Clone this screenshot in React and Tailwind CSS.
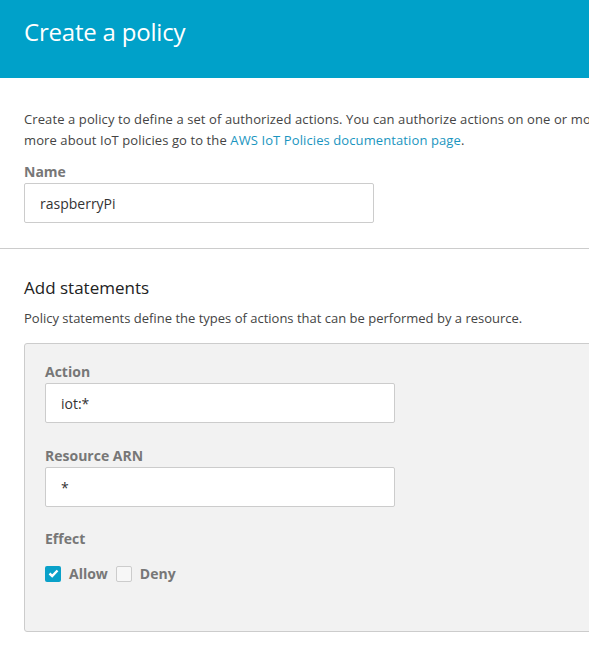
import React from "react";

const Field = ({ label, value, labelClass = "" }) => (
  <div className={labelClass}>
    <div className="text-[14px] font-bold text-[#777] leading-[20px]">{label}</div>
    <div className="mt-[1px] w-[350px] h-[40px] bg-white border border-[#ccc] rounded-[2px] flex items-center px-[15px] text-[14px] text-[#333]">
      {value}
    </div>
  </div>
);

const Checkbox = ({ checked, label }) => (
  <label className="flex items-center">
    {checked ? (
      <span className="w-[16px] h-[16px] rounded-[2px] bg-[#0aa1c9] flex items-center justify-center">
        <svg width="11" height="9" viewBox="0 0 11 9">
          <path d="M1.5 4.5 L4.2 7 L9.5 1.5" fill="none" stroke="white" strokeWidth="2.4" />
        </svg>
      </span>
    ) : (
      <span className="w-[16px] h-[16px] rounded-[2px] bg-[#f7f7f7] border border-[#ccc]" />
    )}
    <span className="ml-[8px] text-[14px] font-bold text-[#777]">{label}</span>
  </label>
);

export default function App() {
  return (
    <div className="w-[589px] h-[645px] overflow-hidden bg-white" style={{ fontFamily: '"Open Sans", sans-serif' }}>
      {/* Header */}
      <div className="h-[78px] bg-[#00a1c9] px-[24px] pt-[15px]">
        <h1 className="text-[24px] text-white leading-[34px] tracking-[-0.2px]">Create a policy</h1>
      </div>

      {/* Intro */}
      <div className="px-[24px] pt-[31px] pb-[25px] border-b border-[#ccc]">
        <p className="text-[13px] text-[#444] leading-[21px] whitespace-nowrap tracking-[0.1px]">
          Create a policy to define a set of authorized actions. You can authorize actions on one or more resources (things, topic filters, topics, and client IDs). To learn
          <br />
          more about IoT policies go to the{" "}
          <span className="text-[#1a95c0]">AWS IoT Policies documentation page</span>.
        </p>
        <div className="mt-[11px]">
          <Field label="Name" value="raspberryPi" />
        </div>
      </div>

      {/* Statements */}
      <div className="px-[24px] pt-[27px]">
        <h2 className="text-[17px] text-[#222] leading-[24px]">Add statements</h2>
        <p className="mt-[8px] text-[13px] text-[#444] leading-[20px] whitespace-nowrap">
          Policy statements define the types of actions that can be performed by a resource.
        </p>
        <div className="mt-[15px] w-[600px] h-[289px] bg-[#f2f2f2] border border-[#ccc] rounded-[3px] px-[20px] pt-[18px]">
          <Field label="Action" value="iot:*" />
          <Field label="Resource ARN" value="*" labelClass="mt-[23px]" />
          <div className="mt-[22px]">
            <div className="text-[14px] font-bold text-[#777] leading-[20px]">Effect</div>
            <div className="mt-[14px] flex items-center gap-[8px]">
              <Checkbox checked label="Allow" />
              <Checkbox label="Deny" />
            </div>
          </div>
        </div>
      </div>
    </div>
  );
}
